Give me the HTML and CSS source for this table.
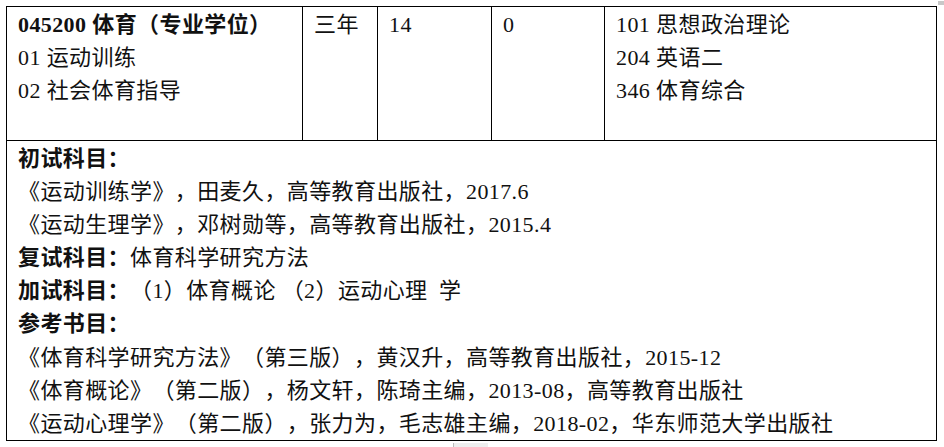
FILE: index.html
```html
<!DOCTYPE html>
<html lang="zh-CN">
<head>
<meta charset="utf-8">
<title>045200 体育（专业学位）</title>
<link rel="stylesheet" href="styles.css">
</head>
<body>
<div class="sheet">
  <div class="row-top">
    <div class="cell">
      <div class="line"><b>045200 体育（专业学位）</b></div>
      <div class="line">01 运动训练</div>
      <div class="line">02 社会体育指导</div>
    </div>
    <div class="cell">
      <div class="line">三年</div>
    </div>
    <div class="cell">
      <div class="line">14</div>
    </div>
    <div class="cell">
      <div class="line">0</div>
    </div>
    <div class="cell last">
      <div class="line">101 思想政治理论</div>
      <div class="line">204 英语二</div>
      <div class="line">346 体育综合</div>
    </div>
  </div>
  <div class="notes">
    <div class="line"><b>初试科目：</b></div>
    <div class="line">《运动训练学》，田麦久，高等教育出版社，2017.6</div>
    <div class="line">《运动生理学》，邓树勋等，高等教育出版社，2015.4</div>
    <div class="line"><b>复试科目：</b>体育科学研究方法</div>
    <div class="line"><b>加试科目：</b>（1）体育概论 （2）运动心理&ensp;学</div>
    <div class="line"><b>参考书目：</b></div>
    <div class="line">《体育科学研究方法》（第三版），黄汉升，高等教育出版社，2015-12</div>
    <div class="line">《体育概论》（第二版），杨文轩，陈琦主编，2013-08，高等教育出版社</div>
    <div class="line">《运动心理学》（第二版），张力为，毛志雄主编，2018-02，华东师范大学出版社</div>
  </div>
</div>
<div class="edge-mark"></div>
<div class="foot-mark"></div>
</body>
</html>
```
FILE: styles.css
```css
html, body {
  margin: 0;
  padding: 0;
  background: #ffffff;
}

body {
  width: 944px;
  height: 447px;
  overflow: hidden;
  position: relative;
  font-family: "Liberation Serif", "Noto Sans CJK SC", serif;
  font-size: 22px;
  letter-spacing: 0.4px;
  color: #111111;
  text-spacing-trim: space-all;
  font-feature-settings: "halt" 0, "palt" 0;
}

.sheet {
  margin: 6px 0 0 6px;
  width: 931px;
  box-sizing: border-box;
  border: 1px solid #000000;
}

.row-top {
  display: grid;
  grid-template-columns: 296px 75px 114px 113px 1fr;
  height: 134px;
  box-sizing: border-box;
  border-bottom: 1px solid #000000;
}

.cell {
  box-sizing: border-box;
  border-right: 1px solid #000000;
  padding: 1px 0 0 11px;
}

.cell.last {
  border-right: none;
}

.line {
  line-height: 33.1px;
  height: 33.1px;
  white-space: nowrap;
}

.line b {
  font-weight: bold;
}

.notes {
  padding: 1px 0 0 11px;
  height: 299px;
  box-sizing: border-box;
}

.edge-mark {
  position: absolute;
  left: 938px;
  top: 1px;
  width: 6px;
  height: 4px;
  background: #c8c8c8;
}

.foot-mark {
  position: absolute;
  left: 453px;
  top: 443px;
  width: 34px;
  height: 4px;
  background: #eeeeee;
  border-left: 1px solid #bbbbbb;
}
```
